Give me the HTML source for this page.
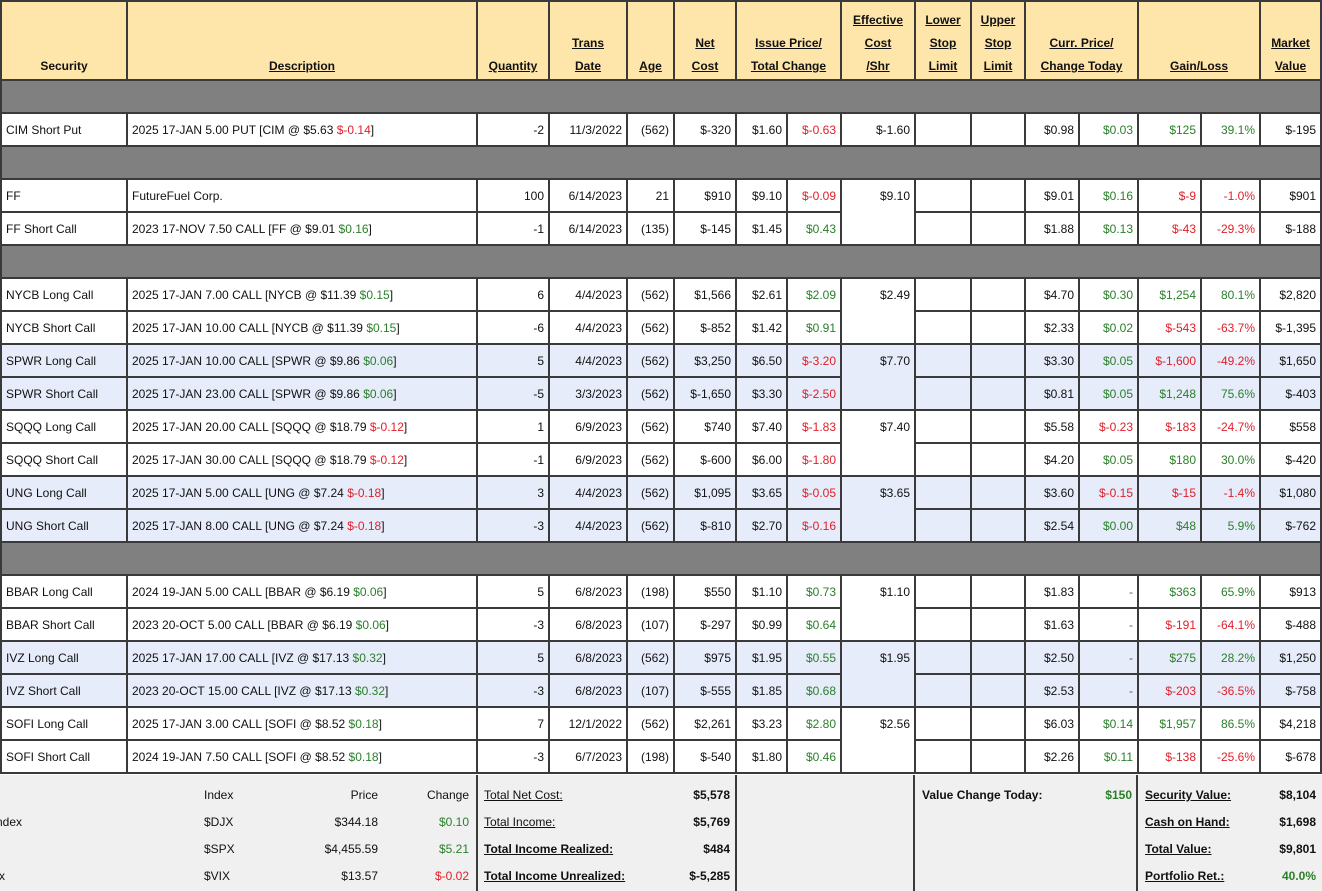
<!DOCTYPE html>
<html><head><meta charset="utf-8"><style>
body{margin:0;background:#fff;font-family:"Liberation Sans",Arial,sans-serif;font-size:12px;color:#111;width:1322px;height:891px;overflow:hidden;position:relative}
table{border-collapse:collapse;table-layout:fixed;width:1320px;position:absolute;left:0;top:0}
td,th{border:2px solid #3a3a3a;padding:0 4px;height:31px;white-space:nowrap;overflow:hidden}
th{background:#fee5aa;font-weight:bold;vertical-align:bottom;text-align:center;line-height:23px;padding-bottom:1px;height:76px}
th u{text-decoration:underline}
tr.g td{background:#808080;height:31px}
td{text-align:right}
td.l{text-align:left}
tr.b td{background:#e6ecfa}
td.e{vertical-align:top;padding-top:9px}
.r{color:#e0202a}.gr{color:#2a7f2a}
.ft{position:absolute;top:775px;height:116px;background:#f0f0f0;border-left:2px solid #3a3a3a;box-sizing:border-box}
.t{position:absolute;white-space:nowrap;margin-top:-2px}
</style></head><body>
<table>
<colgroup><col style="width:126px"><col style="width:350px"><col style="width:72px"><col style="width:78px"><col style="width:47px"><col style="width:62px"><col style="width:51px"><col style="width:54px"><col style="width:74px"><col style="width:56px"><col style="width:54px"><col style="width:54px"><col style="width:59px"><col style="width:63px"><col style="width:59px"><col style="width:61px"></colgroup>
<tr><th>Security</th><th><u>Description</u></th><th><u>Quantity</u></th><th><u>Trans</u><br><u>Date</u></th><th><u>Age</u></th><th><u>Net</u><br><u>Cost</u></th><th colspan="2"><u>Issue Price/</u><br><u>Total Change</u></th><th><u>Effective</u><br><u>Cost</u><br><u>/Shr</u></th><th><u>Lower</u><br><u>Stop</u><br><u>Limit</u></th><th><u>Upper</u><br><u>Stop</u><br><u>Limit</u></th><th colspan="2"><u>Curr. Price/</u><br><u>Change Today</u></th><th colspan="2"><u>Gain/Loss</u></th><th><u>Market</u><br><u>Value</u></th></tr>
<tr class="g"><td colspan="16"></td></tr>
<tr><td class="l">CIM Short Put</td><td class="l">2025 17-JAN 5.00 PUT [CIM @ $5.63 <span class="r">$-0.14</span>]</td><td>-2</td><td>11/3/2022</td><td>(562)</td><td>$-320</td><td>$1.60</td><td class="r">$-0.63</td><td>$-1.60</td><td></td><td></td><td>$0.98</td><td class="gr">$0.03</td><td class="gr">$125</td><td class="gr">39.1%</td><td>$-195</td></tr>
<tr class="g"><td colspan="16"></td></tr>
<tr><td class="l">FF</td><td class="l">FutureFuel Corp.</td><td>100</td><td>6/14/2023</td><td>21</td><td>$910</td><td>$9.10</td><td class="r">$-0.09</td><td class="e" rowspan="2">$9.10</td><td></td><td></td><td>$9.01</td><td class="gr">$0.16</td><td class="r">$-9</td><td class="r">-1.0%</td><td>$901</td></tr>
<tr><td class="l">FF Short Call</td><td class="l">2023 17-NOV 7.50 CALL [FF @ $9.01 <span class="gr">$0.16</span>]</td><td>-1</td><td>6/14/2023</td><td>(135)</td><td>$-145</td><td>$1.45</td><td class="gr">$0.43</td><td></td><td></td><td>$1.88</td><td class="gr">$0.13</td><td class="r">$-43</td><td class="r">-29.3%</td><td>$-188</td></tr>
<tr class="g"><td colspan="16"></td></tr>
<tr><td class="l">NYCB Long Call</td><td class="l">2025 17-JAN 7.00 CALL [NYCB @ $11.39 <span class="gr">$0.15</span>]</td><td>6</td><td>4/4/2023</td><td>(562)</td><td>$1,566</td><td>$2.61</td><td class="gr">$2.09</td><td class="e" rowspan="2">$2.49</td><td></td><td></td><td>$4.70</td><td class="gr">$0.30</td><td class="gr">$1,254</td><td class="gr">80.1%</td><td>$2,820</td></tr>
<tr><td class="l">NYCB Short Call</td><td class="l">2025 17-JAN 10.00 CALL [NYCB @ $11.39 <span class="gr">$0.15</span>]</td><td>-6</td><td>4/4/2023</td><td>(562)</td><td>$-852</td><td>$1.42</td><td class="gr">$0.91</td><td></td><td></td><td>$2.33</td><td class="gr">$0.02</td><td class="r">$-543</td><td class="r">-63.7%</td><td>$-1,395</td></tr>
<tr class="b"><td class="l">SPWR Long Call</td><td class="l">2025 17-JAN 10.00 CALL [SPWR @ $9.86 <span class="gr">$0.06</span>]</td><td>5</td><td>4/4/2023</td><td>(562)</td><td>$3,250</td><td>$6.50</td><td class="r">$-3.20</td><td class="e" rowspan="2">$7.70</td><td></td><td></td><td>$3.30</td><td class="gr">$0.05</td><td class="r">$-1,600</td><td class="r">-49.2%</td><td>$1,650</td></tr>
<tr class="b"><td class="l">SPWR Short Call</td><td class="l">2025 17-JAN 23.00 CALL [SPWR @ $9.86 <span class="gr">$0.06</span>]</td><td>-5</td><td>3/3/2023</td><td>(562)</td><td>$-1,650</td><td>$3.30</td><td class="r">$-2.50</td><td></td><td></td><td>$0.81</td><td class="gr">$0.05</td><td class="gr">$1,248</td><td class="gr">75.6%</td><td>$-403</td></tr>
<tr><td class="l">SQQQ Long Call</td><td class="l">2025 17-JAN 20.00 CALL [SQQQ @ $18.79 <span class="r">$-0.12</span>]</td><td>1</td><td>6/9/2023</td><td>(562)</td><td>$740</td><td>$7.40</td><td class="r">$-1.83</td><td class="e" rowspan="2">$7.40</td><td></td><td></td><td>$5.58</td><td class="r">$-0.23</td><td class="r">$-183</td><td class="r">-24.7%</td><td>$558</td></tr>
<tr><td class="l">SQQQ Short Call</td><td class="l">2025 17-JAN 30.00 CALL [SQQQ @ $18.79 <span class="r">$-0.12</span>]</td><td>-1</td><td>6/9/2023</td><td>(562)</td><td>$-600</td><td>$6.00</td><td class="r">$-1.80</td><td></td><td></td><td>$4.20</td><td class="gr">$0.05</td><td class="gr">$180</td><td class="gr">30.0%</td><td>$-420</td></tr>
<tr class="b"><td class="l">UNG Long Call</td><td class="l">2025 17-JAN 5.00 CALL [UNG @ $7.24 <span class="r">$-0.18</span>]</td><td>3</td><td>4/4/2023</td><td>(562)</td><td>$1,095</td><td>$3.65</td><td class="r">$-0.05</td><td class="e" rowspan="2">$3.65</td><td></td><td></td><td>$3.60</td><td class="r">$-0.15</td><td class="r">$-15</td><td class="r">-1.4%</td><td>$1,080</td></tr>
<tr class="b"><td class="l">UNG Short Call</td><td class="l">2025 17-JAN 8.00 CALL [UNG @ $7.24 <span class="r">$-0.18</span>]</td><td>-3</td><td>4/4/2023</td><td>(562)</td><td>$-810</td><td>$2.70</td><td class="r">$-0.16</td><td></td><td></td><td>$2.54</td><td class="gr">$0.00</td><td class="gr">$48</td><td class="gr">5.9%</td><td>$-762</td></tr>
<tr class="g"><td colspan="16"></td></tr>
<tr><td class="l">BBAR Long Call</td><td class="l">2024 19-JAN 5.00 CALL [BBAR @ $6.19 <span class="gr">$0.06</span>]</td><td>5</td><td>6/8/2023</td><td>(198)</td><td>$550</td><td>$1.10</td><td class="gr">$0.73</td><td class="e" rowspan="2">$1.10</td><td></td><td></td><td>$1.83</td><td class="gr">-</td><td class="gr">$363</td><td class="gr">65.9%</td><td>$913</td></tr>
<tr><td class="l">BBAR Short Call</td><td class="l">2023 20-OCT 5.00 CALL [BBAR @ $6.19 <span class="gr">$0.06</span>]</td><td>-3</td><td>6/8/2023</td><td>(107)</td><td>$-297</td><td>$0.99</td><td class="gr">$0.64</td><td></td><td></td><td>$1.63</td><td class="gr">-</td><td class="r">$-191</td><td class="r">-64.1%</td><td>$-488</td></tr>
<tr class="b"><td class="l">IVZ Long Call</td><td class="l">2025 17-JAN 17.00 CALL [IVZ @ $17.13 <span class="gr">$0.32</span>]</td><td>5</td><td>6/8/2023</td><td>(562)</td><td>$975</td><td>$1.95</td><td class="gr">$0.55</td><td class="e" rowspan="2">$1.95</td><td></td><td></td><td>$2.50</td><td class="gr">-</td><td class="gr">$275</td><td class="gr">28.2%</td><td>$1,250</td></tr>
<tr class="b"><td class="l">IVZ Short Call</td><td class="l">2023 20-OCT 15.00 CALL [IVZ @ $17.13 <span class="gr">$0.32</span>]</td><td>-3</td><td>6/8/2023</td><td>(107)</td><td>$-555</td><td>$1.85</td><td class="gr">$0.68</td><td></td><td></td><td>$2.53</td><td class="gr">-</td><td class="r">$-203</td><td class="r">-36.5%</td><td>$-758</td></tr>
<tr><td class="l">SOFI Long Call</td><td class="l">2025 17-JAN 3.00 CALL [SOFI @ $8.52 <span class="gr">$0.18</span>]</td><td>7</td><td>12/1/2022</td><td>(562)</td><td>$2,261</td><td>$3.23</td><td class="gr">$2.80</td><td class="e" rowspan="2">$2.56</td><td></td><td></td><td>$6.03</td><td class="gr">$0.14</td><td class="gr">$1,957</td><td class="gr">86.5%</td><td>$4,218</td></tr>
<tr><td class="l">SOFI Short Call</td><td class="l">2024 19-JAN 7.50 CALL [SOFI @ $8.52 <span class="gr">$0.18</span>]</td><td>-3</td><td>6/7/2023</td><td>(198)</td><td>$-540</td><td>$1.80</td><td class="gr">$0.46</td><td></td><td></td><td>$2.26</td><td class="gr">$0.11</td><td class="r">$-138</td><td class="r">-25.6%</td><td>$-678</td></tr>
</table>

<div class="ft" style="left:0;width:477px;border-left:none">
<div class="t" style="left:204px;top:15px">Index</div><div class="t" style="right:99px;top:15px">Price</div><div class="t" style="right:8px;top:15px">Change</div>
<div class="t" style="left:-4px;top:42px">ndex</div><div class="t" style="left:204px;top:42px">$DJX</div><div class="t" style="right:99px;top:42px">$344.18</div><div class="t gr" style="right:8px;top:42px">$0.10</div>
<div class="t" style="left:204px;top:69px">$SPX</div><div class="t" style="right:99px;top:69px">$4,455.59</div><div class="t gr" style="right:8px;top:69px">$5.21</div>
<div class="t" style="left:-1px;top:96px">x</div><div class="t" style="left:204px;top:96px">$VIX</div><div class="t" style="right:99px;top:96px">$13.57</div><div class="t r" style="right:8px;top:96px">$-0.02</div>
</div>
<div class="ft" style="left:476px;width:260px">
<div class="t" style="left:6px;top:15px;text-decoration:underline">Total Net Cost:</div><div class="t" style="right:6px;top:15px;font-weight:bold">$5,578</div>
<div class="t" style="left:6px;top:42px;text-decoration:underline">Total Income:</div><div class="t" style="right:6px;top:42px;font-weight:bold">$5,769</div>
<div class="t" style="left:6px;top:69px;text-decoration:underline;font-weight:bold">Total Income Realized:</div><div class="t" style="right:6px;top:69px;font-weight:bold">$484</div>
<div class="t" style="left:6px;top:96px;text-decoration:underline;font-weight:bold">Total Income Unrealized:</div><div class="t" style="right:6px;top:96px;font-weight:bold">$-5,285</div>
</div>
<div class="ft" style="left:735px;width:180px"></div>
<div class="ft" style="left:913px;width:225px">
<div class="t" style="left:7px;top:15px;font-weight:bold">Value Change Today:</div><div class="t gr" style="right:6px;top:15px;font-weight:bold">$150</div>
</div>
<div class="ft" style="left:1136px;width:186px">
<div class="t" style="left:7px;top:15px;text-decoration:underline;font-weight:bold">Security Value:</div><div class="t" style="right:6px;top:15px;font-weight:bold">$8,104</div>
<div class="t" style="left:7px;top:42px;text-decoration:underline;font-weight:bold">Cash on Hand:</div><div class="t" style="right:6px;top:42px;font-weight:bold">$1,698</div>
<div class="t" style="left:7px;top:69px;text-decoration:underline;font-weight:bold">Total Value:</div><div class="t" style="right:6px;top:69px;font-weight:bold">$9,801</div>
<div class="t" style="left:7px;top:96px;text-decoration:underline;font-weight:bold">Portfolio Ret.:</div><div class="t gr" style="right:6px;top:96px;font-weight:bold">40.0%</div>
</div>
</body></html>
